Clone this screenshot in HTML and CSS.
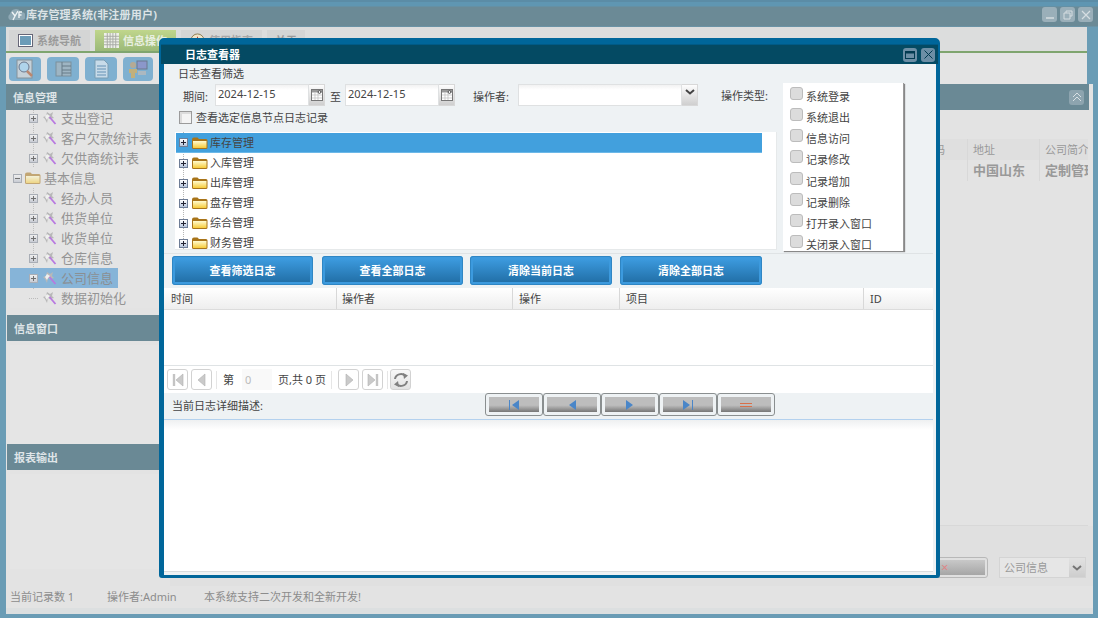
FILE: index.html
```html
<!DOCTYPE html>
<html lang="zh">
<head>
<meta charset="utf-8">
<title>库存管理系统</title>
<link rel="stylesheet" href="styles.css">
</head>
<body>
<svg class="defs" width="0" height="0">
  <defs>
    <linearGradient id="fy" x1="0" y1="0" x2="0" y2="1"><stop offset="0" stop-color="#fffbd0"/><stop offset="1" stop-color="#f7cb3a"/></linearGradient>
    <symbol id="folder" viewBox="0 0 17 14"><path d="M1 3.5Q1 1.5 3 1.5H6.5L8 3H15Q16.5 3 16.5 4.5V11.5Q16.5 13 15 13H2.5Q1 13 1 11.5Z" fill="#a8741a"/><path d="M2 5H15.5V11.5Q15.5 12 15 12H2.5Q2 12 2 11.5Z" fill="url(#fy)"/></symbol>
    <symbol id="wand" viewBox="0 0 15 14"><path d="M1 6L4 5 5 1 8 3 11 1 10 5 12 7 8 8 6 7 5 12 3 8Z" fill="#b8b8b8"/><path d="M3 6L5 3 8 5 6 7 5 9Z" fill="#efefef"/><path d="M7.5 6L13.5 13" stroke="#b878e0" stroke-width="1.8"/></symbol>
    <symbol id="cal" viewBox="0 0 12 12"><rect x=".5" y=".5" width="11" height="11" fill="#fff" stroke="#777"/><rect x="1" y="1" width="10" height="2.5" fill="#999"/><path d="M1 6H11M1 9H11M4 4V11M7 4V11" stroke="#bbb" stroke-width=".7"/><circle cx="8.5" cy="3" r="1.4" fill="#fff" stroke="#333" stroke-width=".8"/></symbol>
    <symbol id="chev" viewBox="0 0 10 6"><path d="M1 1L5 4.5 9 1" fill="none" stroke="#444" stroke-width="2"/></symbol>
    <symbol id="first" viewBox="0 0 12 14"><path d="M2 1V13" stroke="#c4c4c4" stroke-width="2.4"/><path d="M11 1V13L4 7Z" fill="#cacaca" stroke="#b0b0b0" stroke-width=".6"/></symbol>
    <symbol id="prev" viewBox="0 0 12 14"><path d="M9 1V13L2 7Z" fill="#cacaca" stroke="#b0b0b0" stroke-width=".6"/></symbol>
    <symbol id="next" viewBox="0 0 12 14"><path d="M3 1V13L10 7Z" fill="#cacaca" stroke="#b0b0b0" stroke-width=".6"/></symbol>
    <symbol id="last" viewBox="0 0 12 14"><path d="M10 1V13" stroke="#c4c4c4" stroke-width="2.4"/><path d="M1 1V13L8 7Z" fill="#cacaca" stroke="#b0b0b0" stroke-width=".6"/></symbol>
  </defs>
</svg>

<div class="app">
  <header class="app-title">
    <svg class="logo" width="18" height="14" viewBox="0 0 18 14"><path d="M3 12A3.5 3.5 0 0 1 3 6 6 6 0 0 1 14 4 4 4 0 0 1 15 12Z" fill="#8fa9b5"/><path d="M5 4L8 8 11 3M8 8L6 12M12 4H15M12 4V10M12 7H14.5" stroke="#eef3f5" stroke-width="1.4" fill="none"/></svg>
    <span class="app-name">库存管理系统(非注册用户)</span>
    <span class="win-btns">
      <span class="win-btn"><svg width="10" height="10" viewBox="0 0 10 10"><path d="M1 8H9" stroke="#d5dde1" stroke-width="1.5"/></svg></span>
      <span class="win-btn"><svg width="10" height="10" viewBox="0 0 10 10"><path d="M3 3V1H9V6H7M1 3H7V9H1Z" stroke="#d5dde1" fill="none"/></svg></span>
      <span class="win-btn"><svg width="10" height="10" viewBox="0 0 10 10"><path d="M1 1L9 9M9 1L1 9" stroke="#d5dde1" stroke-width="1.2"/></svg></span>
    </span>
  </header>

  <nav class="tabs">
    <div class="tab">
      <svg width="15" height="13" viewBox="0 0 15 13"><rect x=".5" y=".5" width="14" height="12" fill="#fff" stroke="#667"/><rect x="2" y="2" width="11" height="9" fill="#6c9cb8"/></svg>
      <span>系统导航</span>
    </div>
    <div class="tab tab-on">
      <svg width="15" height="15" viewBox="0 0 16 16"><rect width="16" height="16" fill="#eef0e8"/><path d="M3.5 0V16M6.5 0V16M9.5 0V16M12.5 0V16M0 3.5H16M0 6.5H16M0 9.5H16M0 12.5H16" stroke="#a8aaa4"/></svg>
      <span>信息操作</span>
    </div>
    <div class="tab tab-w3">
      <svg width="15" height="15" viewBox="0 0 16 16"><circle cx="8" cy="8" r="7" fill="#f0e4c8" stroke="#8a7a50"/><path d="M8 4V8L11 10" stroke="#a33" fill="none"/></svg>
      <span>使用指南</span>
    </div>
    <div class="tab tab-w4"><span>关于</span></div>
  </nav>

  <div class="toolbar">
    <span class="tool"><svg width="20" height="20" viewBox="0 0 20 20"><rect x="2" y="1" width="15" height="18" fill="#ddd" stroke="#888"/><circle cx="9" cy="8" r="5" fill="#bfe0f5" stroke="#667"/><path d="M12 12L17 17" stroke="#d07a50" stroke-width="2.5"/></svg></span>
    <span class="tool"><svg width="20" height="20" viewBox="0 0 20 20"><rect x="3" y="3" width="15" height="14" fill="#a9b7bf" stroke="#7a868c"/><path d="M9 3V17M9 7H18M9 11H18M9 14H18" stroke="#5f6a70"/></svg></span>
    <span class="tool"><svg width="20" height="20" viewBox="0 0 20 20"><path d="M4 1H13L17 5V19H4Z" fill="#dfeaf2" stroke="#7b98ab"/><path d="M6 7H15M6 10H15M6 13H15M6 16H15" stroke="#5c88ac"/></svg></span>
    <span class="tool tool-n"><svg width="20" height="20" viewBox="0 0 20 20"><rect x="9" y="2" width="10" height="8" fill="#8f8fc8" stroke="#667"/><rect x="10" y="12" width="8" height="4" fill="#bbb"/><circle cx="5" cy="6" r="3" fill="#c8a880"/><path d="M1 10H9V14H7V19H3V14H1Z" fill="#d8b060"/></svg></span>
  </div>

  <div class="main">
    <aside class="side">
      <div class="bar">信息管理</div>
      <div class="side-tree">
        <div class="t-row t-child t-first"><span class="pm pm-dim"></span><svg class="ic-w" width="15" height="14"><use href="#wand"/></svg><span>支出登记</span></div>
        <div class="t-row t-child"><span class="pm pm-dim"></span><svg class="ic-w" width="15" height="14"><use href="#wand"/></svg><span>客户欠款统计表</span></div>
        <div class="t-row t-child"><span class="pm pm-dim"></span><svg class="ic-w" width="15" height="14"><use href="#wand"/></svg><span>欠供商统计表</span></div>
        <div class="t-row t-top"><span class="pm pm-dim pm-minus"></span><svg class="ic-f dim" width="17" height="14"><use href="#folder"/></svg><span>基本信息</span></div>
        <div class="t-row t-child"><span class="pm pm-dim"></span><svg class="ic-w" width="15" height="14"><use href="#wand"/></svg><span>经办人员</span></div>
        <div class="t-row t-child"><span class="pm pm-dim"></span><svg class="ic-w" width="15" height="14"><use href="#wand"/></svg><span>供货单位</span></div>
        <div class="t-row t-child"><span class="pm pm-dim"></span><svg class="ic-w" width="15" height="14"><use href="#wand"/></svg><span>收货单位</span></div>
        <div class="t-row t-child"><span class="pm pm-dim"></span><svg class="ic-w" width="15" height="14"><use href="#wand"/></svg><span>仓库信息</span></div>
        <div class="t-row t-child t-sel"><span class="pm pm-dim"></span><svg class="ic-w" width="15" height="14"><use href="#wand"/></svg><span>公司信息</span></div>
        <div class="t-row t-child t-leaf"><span class="pm pm-none"></span><svg class="ic-w" width="15" height="14"><use href="#wand"/></svg><span>数据初始化</span></div>
      </div>
      <div class="bar bar-2">信息窗口</div>
      <div class="side-body body-a"></div>
      <div class="bar bar-3">报表输出</div>
      <div class="side-body body-b"></div>
    </aside>

    <section class="content">
      <div class="bar bar-r"><span class="collapse"><svg width="10" height="10" viewBox="0 0 10 10"><path d="M1 5L5 1 9 5M1 9L5 5 9 9" fill="none" stroke="#d8e0e4"/></svg></span></div>
      <div class="table">
        <div class="tr th"><span class="td td-a">号码</span><span class="td td-b">地址</span><span class="td td-c">公司简介</span></div>
        <div class="tr tb"><span class="td td-a"></span><span class="td td-b">中国山东</span><span class="td td-c">定制管理</span></div>
      </div>
      <div class="content-body"></div>
      <div class="content-foot">
        <span class="foot-btn"><i class="foot-x">×</i></span>
        <span class="foot-combo"><span class="foot-val">公司信息</span><span class="foot-arrow"><svg width="10" height="6"><use href="#chev"/></svg></span></span>
      </div>
    </section>
  </div>

  <footer class="status">
    <span class="s1">当前记录数 1</span>
    <span class="s2">操作者:Admin</span>
    <span class="s3">本系统支持二次开发和全新开发!</span>
  </footer>
</div>

<div class="dialog">
  <div class="d-title">
    <span class="d-name">日志查看器</span>
    <span class="d-btns">
      <span class="d-btn"><svg width="10" height="8" viewBox="0 0 10 8"><rect x=".5" y=".5" width="9" height="7" fill="none" stroke="#023a50"/><path d="M0 1.5H10" stroke="#023a50" stroke-width="2"/></svg></span>
      <span class="d-btn"><svg width="9" height="9" viewBox="0 0 9 9"><path d="M.5 .5L8.5 8.5M8.5 .5L.5 8.5" stroke="#023a50"/></svg></span>
    </span>
  </div>

  <div class="d-body">
    <div class="filter">
      <div class="filter-l">
        <div class="cap">日志查看筛选</div>
        <div class="f-row">
          <span class="lb lb-1">期间:</span>
          <span class="date"><span class="date-v">2024-12-15</span><span class="pick"><svg width="12" height="12"><use href="#cal"/></svg></span></span>
          <span class="lb lb-2">至</span>
          <span class="date"><span class="date-v">2024-12-15</span><span class="pick"><svg width="12" height="12"><use href="#cal"/></svg></span></span>
          <span class="lb lb-3">操作者:</span>
          <span class="combo"><span class="combo-v"></span><span class="pick"><svg width="10" height="6"><use href="#chev"/></svg></span></span>
          <span class="lb lb-4">操作类型:</span>
        </div>
        <label class="node-check"><span class="sq"></span>查看选定信息节点日志记录</label>
        <div class="d-tree">
          <div class="n-row n-sel"><span class="pm"></span><svg class="ic-n" width="17" height="14"><use href="#folder"/></svg><span>库存管理</span></div>
          <div class="n-row"><span class="pm"></span><svg class="ic-n" width="17" height="14"><use href="#folder"/></svg><span>入库管理</span></div>
          <div class="n-row"><span class="pm"></span><svg class="ic-n" width="17" height="14"><use href="#folder"/></svg><span>出库管理</span></div>
          <div class="n-row"><span class="pm"></span><svg class="ic-n" width="17" height="14"><use href="#folder"/></svg><span>盘存管理</span></div>
          <div class="n-row"><span class="pm"></span><svg class="ic-n" width="17" height="14"><use href="#folder"/></svg><span>综合管理</span></div>
          <div class="n-row"><span class="pm"></span><svg class="ic-n" width="17" height="14"><use href="#folder"/></svg><span>财务管理</span></div>
        </div>
      </div>
      <div class="types">
        <div class="ty"><span class="ck"></span><span class="ty-t">系统登录</span></div>
        <div class="ty"><span class="ck"></span><span class="ty-t">系统退出</span></div>
        <div class="ty"><span class="ck"></span><span class="ty-t">信息访问</span></div>
        <div class="ty"><span class="ck"></span><span class="ty-t">记录修改</span></div>
        <div class="ty"><span class="ck"></span><span class="ty-t">记录增加</span></div>
        <div class="ty"><span class="ck"></span><span class="ty-t">记录删除</span></div>
        <div class="ty"><span class="ck"></span><span class="ty-t">打开录入窗口</span></div>
        <div class="ty"><span class="ck"></span><span class="ty-t">关闭录入窗口</span></div>
      </div>
    </div>

    <div class="actions">
      <button class="act act-1">查看筛选日志</button>
      <button class="act act-2">查看全部日志</button>
      <button class="act act-3">清除当前日志</button>
      <button class="act act-4">清除全部日志</button>
    </div>

    <div class="g-head">
      <span class="g-c g-1">时间</span><span class="g-c g-2">操作者</span><span class="g-c g-3">操作</span><span class="g-c g-4">项目</span><span class="g-c g-5">ID</span>
    </div>
    <div class="g-body"></div>

    <div class="pager">
      <span class="p-btn"><svg width="12" height="14"><use href="#first"/></svg></span>
      <span class="p-btn"><svg width="12" height="14"><use href="#prev"/></svg></span>
      <span class="p-sep"></span>
      <span class="p-t">第</span>
      <span class="p-in">0</span>
      <span class="p-t p-t2">页,共 0 页</span>
      <span class="p-sep"></span>
      <span class="p-btn"><svg width="12" height="14"><use href="#next"/></svg></span>
      <span class="p-btn"><svg width="12" height="14"><use href="#last"/></svg></span>
      <span class="p-sep"></span>
      <span class="p-btn p-ref"><svg width="16" height="16" viewBox="0 0 16 16"><path d="M2 7A6 5.5 0 0 1 12.5 4" fill="none" stroke="#808080" stroke-width="2"/><path d="M10 1L15 3.5 11 7Z" fill="#808080"/><path d="M14 9A6 5.5 0 0 1 3.5 12" fill="none" stroke="#808080" stroke-width="2"/><path d="M6 15L1 12.5 5 9Z" fill="#808080"/></svg></span>
    </div>

    <div class="desc">
      <span class="desc-t">当前日志详细描述:</span>
      <span class="navs">
        <span class="nav"><span class="nav-in"><svg width="12" height="10" viewBox="0 0 12 10"><path d="M1.5 0V10" stroke="#4a86c8"/><path d="M11 0V10L4 5Z" fill="#4a86c8"/></svg></span></span>
        <span class="nav"><span class="nav-in"><svg width="12" height="10" viewBox="0 0 12 10"><path d="M10 0V10L3 5Z" fill="#4a86c8"/></svg></span></span>
        <span class="nav"><span class="nav-in"><svg width="12" height="10" viewBox="0 0 12 10"><path d="M2 0V10L9 5Z" fill="#4a86c8"/></svg></span></span>
        <span class="nav"><span class="nav-in"><svg width="12" height="10" viewBox="0 0 12 10"><path d="M1 0V10L8 5Z" fill="#4a86c8"/><path d="M10.5 0V10" stroke="#4a86c8"/></svg></span></span>
        <span class="nav"><span class="nav-in"><svg width="12" height="4" viewBox="0 0 12 4"><path d="M0 .5H12M0 3.5H12" stroke="#d8704a"/></svg></span></span>
      </span>
    </div>

    <div class="detail"></div>
  </div>
</div>
</body>
</html>
```

FILE: styles.css
```css
* { box-sizing: border-box; }
html, body { margin: 0; padding: 0; }
body {
  width: 1098px;
  height: 618px;
  overflow: hidden;
  font: 11px/14px "Noto Sans", "Noto Sans CJK SC", sans-serif;
  color: #444;
  background: #6a9cb5;
}
.defs { display: block; height: 0; }

/* main window */
.app {
  width: 1098px;
  height: 618px;
  display: flex;
  flex-direction: column;
  padding: 0 5px 4px 6px;
  background: linear-gradient(#5b8ca6 0, #5b8ca6 2px, #5f96b2 2px, #5f96b2 6px, #6b8a96 7px, #6b8a96 26px, #6a9cb5 27px);
}
.app-title {
  height: 27px;
  flex: none;
  display: flex;
  align-items: center;
  margin: 0 -5px 0 -6px;
  padding: 2px 5px 0 7px;
  color: #dbe3e6;
}
.logo { margin-right: 1px; }
.app-name { font-weight: 700; letter-spacing: .2px; }
.win-btns { margin-left: auto; display: flex; gap: 3px; }
.win-btn {
  width: 15px; height: 15px; border-radius: 3px;
  background: #9aafb9;
  display: flex; align-items: center; justify-content: center;
}

.tabs {
  height: 26px;
  flex: none;
  padding: 3px 0 0 3px;
  display: flex;
  gap: 5px;
  background: #dcdddd;
  border-bottom: 2px solid #7fa56f;
  margin-right: 6px;
}
.tab {
  width: 81px;
  height: 21px;
  display: flex;
  align-items: center;
  gap: 4px;
  padding-left: 9px;
  background: #d4d5d5;
  color: #9a9a9a;
  font-weight: 700;
}
.tab-on {
  background: linear-gradient(#c0d68c, #9bb978);
  color: #e8efe0;
}
.tab-w3 { color: #a8a8a8; }
.tab-w4 { width: 38px; justify-content: center; padding: 0; }

.toolbar {
  height: 31px;
  flex: none;
  display: flex;
  gap: 6px;
  padding: 4px 0 0 3px;
  background: #e4e4e4;
  margin-right: 6px;
}
.tool {
  width: 32px; height: 24px;
  border-radius: 4px;
  background: #7fb0d0;
  display: flex; align-items: center; justify-content: center;
}
.tool svg { opacity: .75; }
.tool-n { width: 30px; }

.main { flex: 1; min-height: 0; display: flex; background: #e3e3e3; }
.bar {
  height: 26px;
  flex: none;
  background: #6a8995;
  color: #dfe5e8;
  font-weight: 700;
  line-height: 27px;
  padding-left: 7px;
}
.side { width: 164px; flex: none; display: flex; flex-direction: column; }
.side-tree {
  height: 198px;
  flex: none;
  overflow: hidden;
  margin-left: 4px;
  background-color: #e4e4e4;
}
.t-first { margin-top: -2px; }
.t-row {
  height: 20px;
  display: flex;
  align-items: center;
  font-size: 13px;
  color: #949494;
  width: 108px;
  white-space: nowrap;
}
.t-child {
  padding-left: 19px;
  background: linear-gradient(#bdbdbd 50%, transparent 0) 23px 0 / 1px 2px repeat-y;
}
.t-top { padding-left: 3px; }
.t-sel { background: #86b4d8; color: #8a8f93; }
.t-leaf { background-repeat: no-repeat; }
.pm {
  width: 9px; height: 9px;
  flex: none;
  border: 1px solid #6e7d96;
  background:
    linear-gradient(#223, #223) center / 5px 1px no-repeat,
    linear-gradient(#223, #223) center / 1px 5px no-repeat,
    linear-gradient(#fff, #b6c4dc);
}
.pm-dim {
  border-color: #a9aeb6;
  background:
    linear-gradient(#707070, #707070) center / 5px 1px no-repeat,
    linear-gradient(#707070, #707070) center / 1px 5px no-repeat,
    linear-gradient(#eee, #c8ccd4);
}
.pm-minus {
  background:
    linear-gradient(#707070, #707070) center / 5px 1px no-repeat,
    linear-gradient(#eee, #c8ccd4);
}
.pm-none { border: 0; background: none; border-bottom: 1px dotted #bbb; height: 10px; margin-bottom: 9px; }
.ic-w { margin: 0 4px 0 4px; flex: none; }
.ic-f { margin: 0 3px 0 2px; flex: none; }
.dim { opacity: .55; }
.bar-2 { margin-top: 7px; margin-left: 1px; }
.bar-3 { margin-left: 1px; }
.side-body { flex: none; margin-left: 4px; background: #e5e5e5; }
.body-a { height: 99px; margin-top: 4px; }
.body-b { height: 95px; margin-top: 4px; }

.content { flex: 1; min-width: 0; display: flex; flex-direction: column; }
.bar-r {
  display: flex; align-items: center; justify-content: flex-end;
  padding-right: 5px; margin-right: 4px;
}
.collapse {
  width: 15px; height: 15px; border-radius: 3px;
  background: #8da4af;
  display: flex; align-items: center; justify-content: center;
}
.table { margin-top: 29px; margin-right: 5px; }
.tr { display: flex; height: 21px; justify-content: flex-end; }
.td { padding-left: 5px; line-height: 21px; border-left: 1px solid #d8d8d8; white-space: nowrap; overflow: hidden; color: #999; }
.td-a { width: 60px; border-left: 0; padding-left: 16px; }
.td-b { width: 72px; }
.td-c { width: 49px; }
.th { background: #dfdfdf; }
.tb { font-size: 13px; font-weight: 700; color: #9a9a9a; }
.content-body { height: 345px; flex: none; background: #e3e3e3; border-bottom: 1px solid #d8d8d8; margin-right: 5px; }
.content-foot { flex: 1; display: flex; justify-content: flex-end; align-items: flex-start; padding: 31px 7px 0 0; gap: 11px; background: #e0e0e0; }
.foot-btn { width: 60px; height: 21px; border: 1px solid #b8b8b8; border-radius: 3px; padding: 2px; background: #e0e0e0; }
.foot-x { display: block; height: 15px; padding-left: 10px; background: linear-gradient(#c8c8c8, #a6a6a6); font: 13px/15px "Noto Sans", sans-serif; color: #d88; }
.foot-combo { width: 87px; height: 21px; display: flex; border: 1px solid #d4d4d4; background: #e6e6e6; }
.foot-val { flex: 1; padding-left: 4px; line-height: 19px; color: #999; }
.foot-arrow { width: 16px; background: linear-gradient(#e0e0e0, #c4c4c4); display: flex; align-items: center; justify-content: center; opacity: .7; }

.status {
  height: 28px;
  flex: none;
  background: #e3e3e3;
  border-bottom: 6px solid #dcdfe0;
  display: flex;
  align-items: center;
  padding-left: 4px;
  color: #8c8c8c;
}
.s1 { width: 97px; }
.s2 { width: 97px; }

/* dialog window */
.dialog {
  position: absolute;
  left: 159px;
  top: 38px;
  width: 781px;
  height: 540px;
  display: flex;
  flex-direction: column;
  border: solid #00669a;
  border-width: 6px 4px 3px 5px;
  border-radius: 5px 5px 3px 3px;
  background: #00669a;
}
.d-title {
  height: 20px;
  flex: none;
  margin: 0 -2px 0 -3px;
  background: #044a63;
  color: #fff;
  display: flex;
  align-items: center;
  padding: 0 3px 0 24px;
  border-top: 1px solid #005a86;
  font-weight: 700;
}
.d-btns { margin-left: auto; display: flex; gap: 4px; }
.d-btn {
  width: 14px; height: 14px; border-radius: 3px;
  background: #6c8ea5;
  display: flex; align-items: center; justify-content: center;
}
.d-body {
  flex: 1;
  min-height: 0;
  display: flex;
  flex-direction: column;
  background: #eef2f4;
  padding: 0 3px 3px 0;
}
.filter {
  height: 190px;
  flex: none;
  display: flex;
  border-bottom: 1px solid #dfe3e5;
}
.filter-l { width: 619px; flex: none; padding-left: 14px; }
.cap { margin-top: 3px; height: 14px; }
.f-row { margin-top: 3px; height: 22px; display: flex; align-items: center; }
.lb { white-space: nowrap; padding-top: 3px; }
.lb-1 { margin-left: 5px; width: 32px; }
.lb-2 { margin-left: 5px; width: 15px; }
.lb-3 { margin-left: 18px; width: 45px; }
.lb-4 { margin-left: 23px; width: 60px; padding-top: 2px; }
.date, .combo { display: flex; height: 22px; }
.date { width: 110px; }
.combo { width: 180px; }
.date-v, .combo-v {
  flex: 1;
  background: linear-gradient(#f2f2f2, #fff 5px);
  border: 1px solid #dfe1e2;
  padding-left: 2px;
  line-height: 18px;
  color: #444;
}
.pick {
  width: 16px;
  flex: none;
  background: linear-gradient(#fdfdfd, #cfcfcf);
  border: 1px solid #d8d8d8;
  border-left: 0;
  display: flex;
  justify-content: center;
  align-items: flex-start;
  padding-top: 4px;
}
.node-check { display: flex; align-items: center; gap: 4px; height: 13px; margin-top: 5px; margin-left: 1px; }
.sq { width: 13px; height: 13px; border: 1px solid #9b9b9b; background: #f4f4f4; box-shadow: inset 1px 1px 0 1px #dcdcdc; flex: none; }
.d-tree {
  margin-top: 8px;
  margin-left: -3px;
  width: 602px;
  height: 118px;
  background: linear-gradient(#b5b5b5 50%, transparent 0) 8px 0 / 1px 2px repeat-y #fff;
  overflow: hidden;
  padding: 1px 0 0 1px;
  border-right: 1px solid #e6e9ea;
  border-bottom: 1px solid #e6e9ea;
}
.n-row { height: 20px; width: 586px; display: flex; align-items: center; padding-left: 3px; }
.n-sel { background: #42a0dd; border-bottom: 1px solid #6cb8e8; }
.ic-n { margin: 0 2px 0 3px; flex: none; }
.types {
  width: 121px;
  height: 168px;
  margin-top: 19px;
  background: #fff;
  box-shadow: 1px 1px 1px #888;
  overflow: hidden;
  border-right: 1px solid #9a9a9a;
}
.ty { height: 21.15px; display: flex; padding: 4px 0 0 7px; }
.ck { width: 13px; height: 13px; flex: none; border: 1px solid #bcbcbc; border-radius: 3px; background: #dcdcdc; }
.ty-t { margin: 3px 0 0 3px; white-space: nowrap; }

.actions { height: 34px; flex: none; padding: 2px 0 0 8px; display: flex; }
.act {
  width: 141px;
  height: 29px;
  padding: 0;
  font: 700 11px/1 "Noto Sans", "Noto Sans CJK SC", sans-serif;
  color: #fff;
  border: 3px solid #3c9ade;
  border-radius: 3px;
  outline: 1px solid #2f86c4;
  outline-offset: -1px;
  background: linear-gradient(#3c9ade, #2270a8);
}
.act-1 { margin-right: 9px; }
.act-2 { margin-right: 7px; }
.act-3 { width: 142px; margin-right: 8px; }
.act-4 { width: 142px; }

.g-head {
  height: 22px;
  flex: none;
  display: flex;
  background: linear-gradient(#fff, #eeeeee);
  border-bottom: 1px solid #dcdcdc;
}
.g-c { padding-left: 6px; line-height: 21px; border-right: 1px solid #d8d8d8; }
.g-1 { width: 173px; padding-left: 7px; }
.g-2 { width: 176px; padding-left: 5px; }
.g-3 { width: 107px; }
.g-4 { width: 244px; }
.g-5 { flex: 1; border-right: 0; }
.g-body { height: 56px; flex: none; background: #fff; border-bottom: 1px solid #dfe3e5; }

.pager {
  height: 27px;
  flex: none;
  display: flex;
  align-items: center;
  background: #fff;
  padding-left: 3px;
}
.p-btn {
  width: 21px; height: 21px;
  margin-right: 3px;
  border: 1px solid #d2d2d2;
  border-radius: 3px;
  background: #fff;
  display: flex; align-items: center; justify-content: center;
}
.p-ref { background: linear-gradient(#f8f8f8, #e2e2e2); margin-right: 0; }
.p-sep { width: 1px; height: 18px; background: #e6e6e6; margin: 0 3px 0 1px; }
.p-t { margin-left: 3px; }
.p-in { width: 30px; height: 21px; margin-left: 8px; padding-left: 3px; line-height: 21px; background: #f9f9f9; color: #bbb; }
.p-t2 { width: 49px; margin-left: 6px; margin-right: 3px; white-space: nowrap; }
.p-sep + .p-btn { margin-left: 3px; }
.p-sep + .p-ref { margin-left: -1px; }

.desc {
  height: 26px;
  flex: none;
  display: flex;
  align-items: center;
  padding-left: 8px;
}
.desc-t { width: 313px; flex: none; }
.navs { display: flex; align-self: flex-start; }
.nav {
  width: 58px; height: 23px;
  padding: 3px;
  border: 1px solid #8a8f90;
  border-radius: 3px;
  background: #eef2f4;
}
.nav-in {
  display: flex;
  height: 15px;
  align-items: center;
  justify-content: center;
  background: linear-gradient(#bdbdbd 0, #bdbdbd 55%, #777 100%);
}
.detail {
  flex: 1;
  min-height: 0;
  background: linear-gradient(#eef0f1, #fff 10px);
  border-top: 1px solid #b3d1ee;
  border-bottom: 1px solid #d8dcde;
}
```
